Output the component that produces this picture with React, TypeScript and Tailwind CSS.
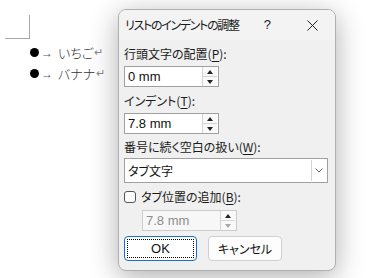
const JP = "font-['Noto_Sans_CJK_JP','Noto_Sans',sans-serif] [font-feature-settings:'palt']";

function SpinBox({ value, disabled }: { value: string; disabled?: boolean }) {
  return (
    <div
      className={`flex h-[21px] w-[95px] items-stretch border ${
        disabled ? "border-[#cccccc] bg-[#f7f7f7]" : "border-[#a0a0a0] bg-white"
      }`}
    >
      <div
        className={`flex flex-1 items-center pl-[3px] font-['Liberation_Sans',sans-serif] text-[13px] ${
          disabled ? "text-[#8d8d8d]" : "text-[#111]"
        }`}
      >
        {value}
      </div>
      <div className="mr-[1px] flex w-[15px] flex-col border-l border-[#d4d4d4]">
        <div className="flex flex-1 items-center justify-center border-b border-[#d4d4d4] bg-[#f9f9f9]">
          <span className="h-0 w-0 border-x-[3.5px] border-b-[4px] border-x-transparent border-b-[#222]" />
        </div>
        <div className="flex flex-1 items-center justify-center bg-[#f9f9f9]">
          <span
            className={`h-0 w-0 border-x-[3.5px] border-t-[4px] border-x-transparent ${
              disabled ? "border-t-[#a8a8a8]" : "border-t-[#222]"
            }`}
          />
        </div>
      </div>
    </div>
  );
}

function Label({ text, accel }: { text: string; accel: string }) {
  return (
    <div className={`h-4 text-[12px] leading-4 text-[#1a1a1a] ${JP}`}>
      {text}(<span className="underline underline-offset-2">{accel}</span>):
    </div>
  );
}

function ListLine({ word }: { word: string }) {
  return (
    <div className="flex h-[21px] items-center pl-[30px]">
      <span className="h-[9px] w-[9px] rounded-full bg-black" />
      <span className="ml-[2px] text-[12px] text-[#555]">→</span>
      <span className={`ml-[5px] text-[13px] font-light text-[#333] ${JP}`}>{word}</span>
      <span className="ml-[1px] text-[11px] text-[#888]">↵</span>
    </div>
  );
}

export default function App() {
  return (
    <div className="relative h-[278px] w-[388px] overflow-hidden bg-white">
      <div className="ml-[5px] mt-[15px] h-[24px] w-[25px] border-b border-r border-[#a8a8a8]" />
      <div className="mt-[3px]">
        <ListLine word="いちご" />
        <ListLine word="バナナ" />
      </div>

      <div className="absolute left-[118px] top-[9px] flex h-[262px] w-[218px] flex-col overflow-hidden rounded-lg border border-[#b0b0b0] bg-[#f0f0f0] shadow-[0_6px_28px_rgba(0,0,0,0.32)]">
        <div className="flex h-[30px] shrink-0 items-center bg-[#f3f3f3] pl-[6px]">
          <span className={`text-[12px] tracking-[-1.3px] text-[#1a1a1a] ${JP}`}>リストのインデントの調整</span>
          <span className="ml-auto mr-[36px] font-['Liberation_Sans',sans-serif] text-[13px] text-[#222]">?</span>
          <svg width="11" height="11" viewBox="0 0 11 11" className="mr-[17px]">
            <path d="M0.5 0.5 L10.5 10.5 M10.5 0.5 L0.5 10.5" stroke="#222" strokeWidth="1" />
          </svg>
        </div>

        <div className="flex flex-col pl-[5px] pt-[6px]">
          <Label text="行頭文字の配置" accel="P" />
          <div className="mt-[4px]">
            <SpinBox value="0 mm" />
          </div>

          <div className="mt-[6px]">
            <Label text="インデント" accel="T" />
          </div>
          <div className="mt-[4px]">
            <SpinBox value="7.8 mm" />
          </div>

          <div className="mt-[5px]">
            <Label text="番号に続く空白の扱い" accel="W" />
          </div>
          <div className="mt-[3px] flex h-[25px] w-[204px] border border-[#a0a0a0] bg-white">
            <div className={`flex flex-1 items-center pl-[3px] text-[12px] text-[#111] ${JP}`}>タブ文字</div>
            <div className="m-[1px] flex w-[15px] items-center justify-center border-l border-[#d4d4d4]">
              <svg width="8" height="5" viewBox="0 0 8 5">
                <path d="M0.5 0.5 L4 4 L7.5 0.5" fill="none" stroke="#666" strokeWidth="1" />
              </svg>
            </div>
          </div>

          <div className="mt-[6px] flex h-4 items-center">
            <span className="h-[12px] w-[12px] rounded-[3px] border border-[#555] bg-[#fbfbfb]" />
            <span className="ml-[5px]">
              <Label text="タブ位置の追加" accel="B" />
            </span>
          </div>

          <div className="ml-[18px] mt-[5px]">
            <SpinBox value="7.8 mm" disabled />
          </div>

          <div className="mt-[5px] flex gap-[11px]">
            <button className="flex h-[25px] w-[73px] items-center justify-center rounded-[4px] border border-[#1a6fc4] bg-white p-[2px]">
              <span className="flex h-full w-full items-center justify-center border border-dotted border-black font-['Liberation_Sans',sans-serif] text-[13px] text-[#111]">
                OK
              </span>
            </button>
            <button
              className={`flex h-[25px] w-[74px] items-center justify-center rounded-[4px] border border-[#d0d0d0] bg-[#fdfdfd] text-[12px] text-[#111] ${JP}`}
            >
              キャンセル
            </button>
          </div>
        </div>
      </div>
    </div>
  );
}
